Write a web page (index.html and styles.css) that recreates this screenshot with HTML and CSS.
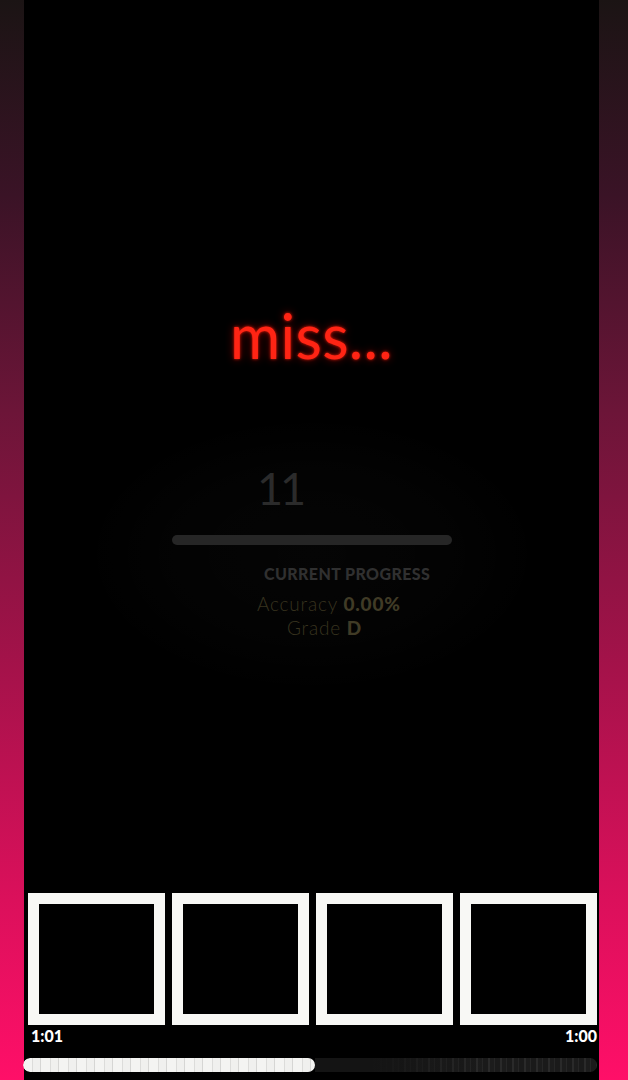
FILE: index.html
```html
<!DOCTYPE html>
<html>
<head>
<meta charset="utf-8">
<link rel="stylesheet" href="styles.css">
</head>
<body>
<div class="frame">
  <div class="side side-left"></div>
  <main class="stage">
    <div class="miss">miss...</div>
    <section class="panel">
      <div class="score">11</div>
      <div class="bar"></div>
      <div class="label">CURRENT PROGRESS</div>
      <div class="accuracy">Accuracy <b>0.00%</b></div>
      <div class="grade">Grade <b>D</b></div>
    </section>
    <div class="spacer"></div>
    <div class="thumbs">
      <div class="thumb"></div>
      <div class="thumb"></div>
      <div class="thumb"></div>
      <div class="thumb"></div>
    </div>
    <div class="times">
      <span>1:01</span>
      <span>1:00</span>
    </div>
    <div class="slider">
      <div class="slider-fill"></div>
      <div class="slider-rest"></div>
    </div>
  </main>
  <div class="side side-right"></div>
</div>
</body>
</html>
```

FILE: styles.css
```css
html, body {
  margin: 0;
  padding: 0;
  background: #000;
  height: 1080px;
  overflow: hidden;
}
.frame {
  display: flex;
  width: 628px;
  height: 1080px;
}
.side {
  background: linear-gradient(to bottom, #1b1414 0%, #3a1326 18%, #6c1538 38%, #a5124a 62%, #d8105a 82%, #ff0f68 100%);
}
.side-left { width: 24px; }
.side-right { width: 29px; }
.stage {
  width: 575px;
  background: #000;
  display: flex;
  flex-direction: column;
  font-family: Lato, "Open Sans", sans-serif;
}
.miss {
  margin-top: 298px;
  height: 76px;
  padding-left: 206px;
  font-size: 61px;
  line-height: 76px;
  color: #ff2414;
  letter-spacing: 0.3px;
  text-shadow: 0 0 3px rgba(255, 30, 10, 0.9), 0 0 8px rgba(150, 0, 0, 0.8);
}
.panel {
  margin-top: 40px;
  padding: 50px 0 60px;
  display: flex;
  flex-direction: column;
  align-items: flex-start;
  background: radial-gradient(ellipse 230px 140px at 288px 140px, rgba(255,255,255,0.02) 0, rgba(255,255,255,0.012) 60%, rgba(255,255,255,0) 100%);
}
.score {
  margin-left: 233px;
  font-size: 45px;
  font-weight: 400;
  line-height: 48px;
  height: 48px;
  color: #2b2b2b;
  letter-spacing: -3px;
}
.bar {
  margin-top: 23px;
  margin-left: 148px;
  width: 280px;
  height: 10px;
  border-radius: 5px;
  background: #262626;
}
.label {
  margin-top: 20px;
  margin-left: 240px;
  font-size: 16px;
  font-weight: 900;
  line-height: 18px;
  color: #303030;
  letter-spacing: 0.4px;
}
.accuracy {
  margin-top: 10px;
  margin-left: 233px;
  font-size: 19px;
  font-weight: 300;
  line-height: 22px;
  color: #38331f;
  letter-spacing: 0.8px;
}
.accuracy b, .grade b {
  font-weight: 900;
  color: #403b26;
}
.grade {
  margin-top: 2px;
  margin-left: 263px;
  font-size: 19px;
  font-weight: 300;
  line-height: 22px;
  color: #38331f;
  letter-spacing: 0.8px;
}
.spacer { flex: 1; }
.thumbs {
  display: flex;
  gap: 7px;
  padding-left: 4px;
}
.thumb {
  width: 137px;
  height: 132px;
  box-sizing: border-box;
  border: 11px solid #f8f8f5;
  background: #000;
}
.times {
  display: flex;
  justify-content: space-between;
  padding: 0 2px 0 7px;
  height: 20px;
  margin-top: 1px;
  font-size: 16px;
  font-weight: 900;
  line-height: 20px;
  color: #fff;
}
.slider {
  margin-top: 12px;
  margin-left: -1px;
  width: 574px;
  height: 14px;
  border-radius: 7px;
  display: flex;
  overflow: hidden;
  margin-bottom: 8px;
}
.slider-fill {
  width: 292px;
  border-radius: 7px;
  background: repeating-linear-gradient(to right, #f4f4f2 0, #f4f4f2 9px, #dcdcda 9px, #dcdcda 10px, #f0f0ee 10px, #f0f0ee 17px, #d6d6d4 17px, #d6d6d4 18px);
}
.slider-rest {
  flex: 1;
  background: linear-gradient(to right, #141414 0, #141414 20%, rgba(20,20,20,0) 60%), repeating-linear-gradient(to right, #1a1a1a 0, #1a1a1a 5px, #2a2a2a 5px, #2a2a2a 7px, #1c1c1c 7px, #1c1c1c 11px, #262626 11px, #262626 12px);
}
```
